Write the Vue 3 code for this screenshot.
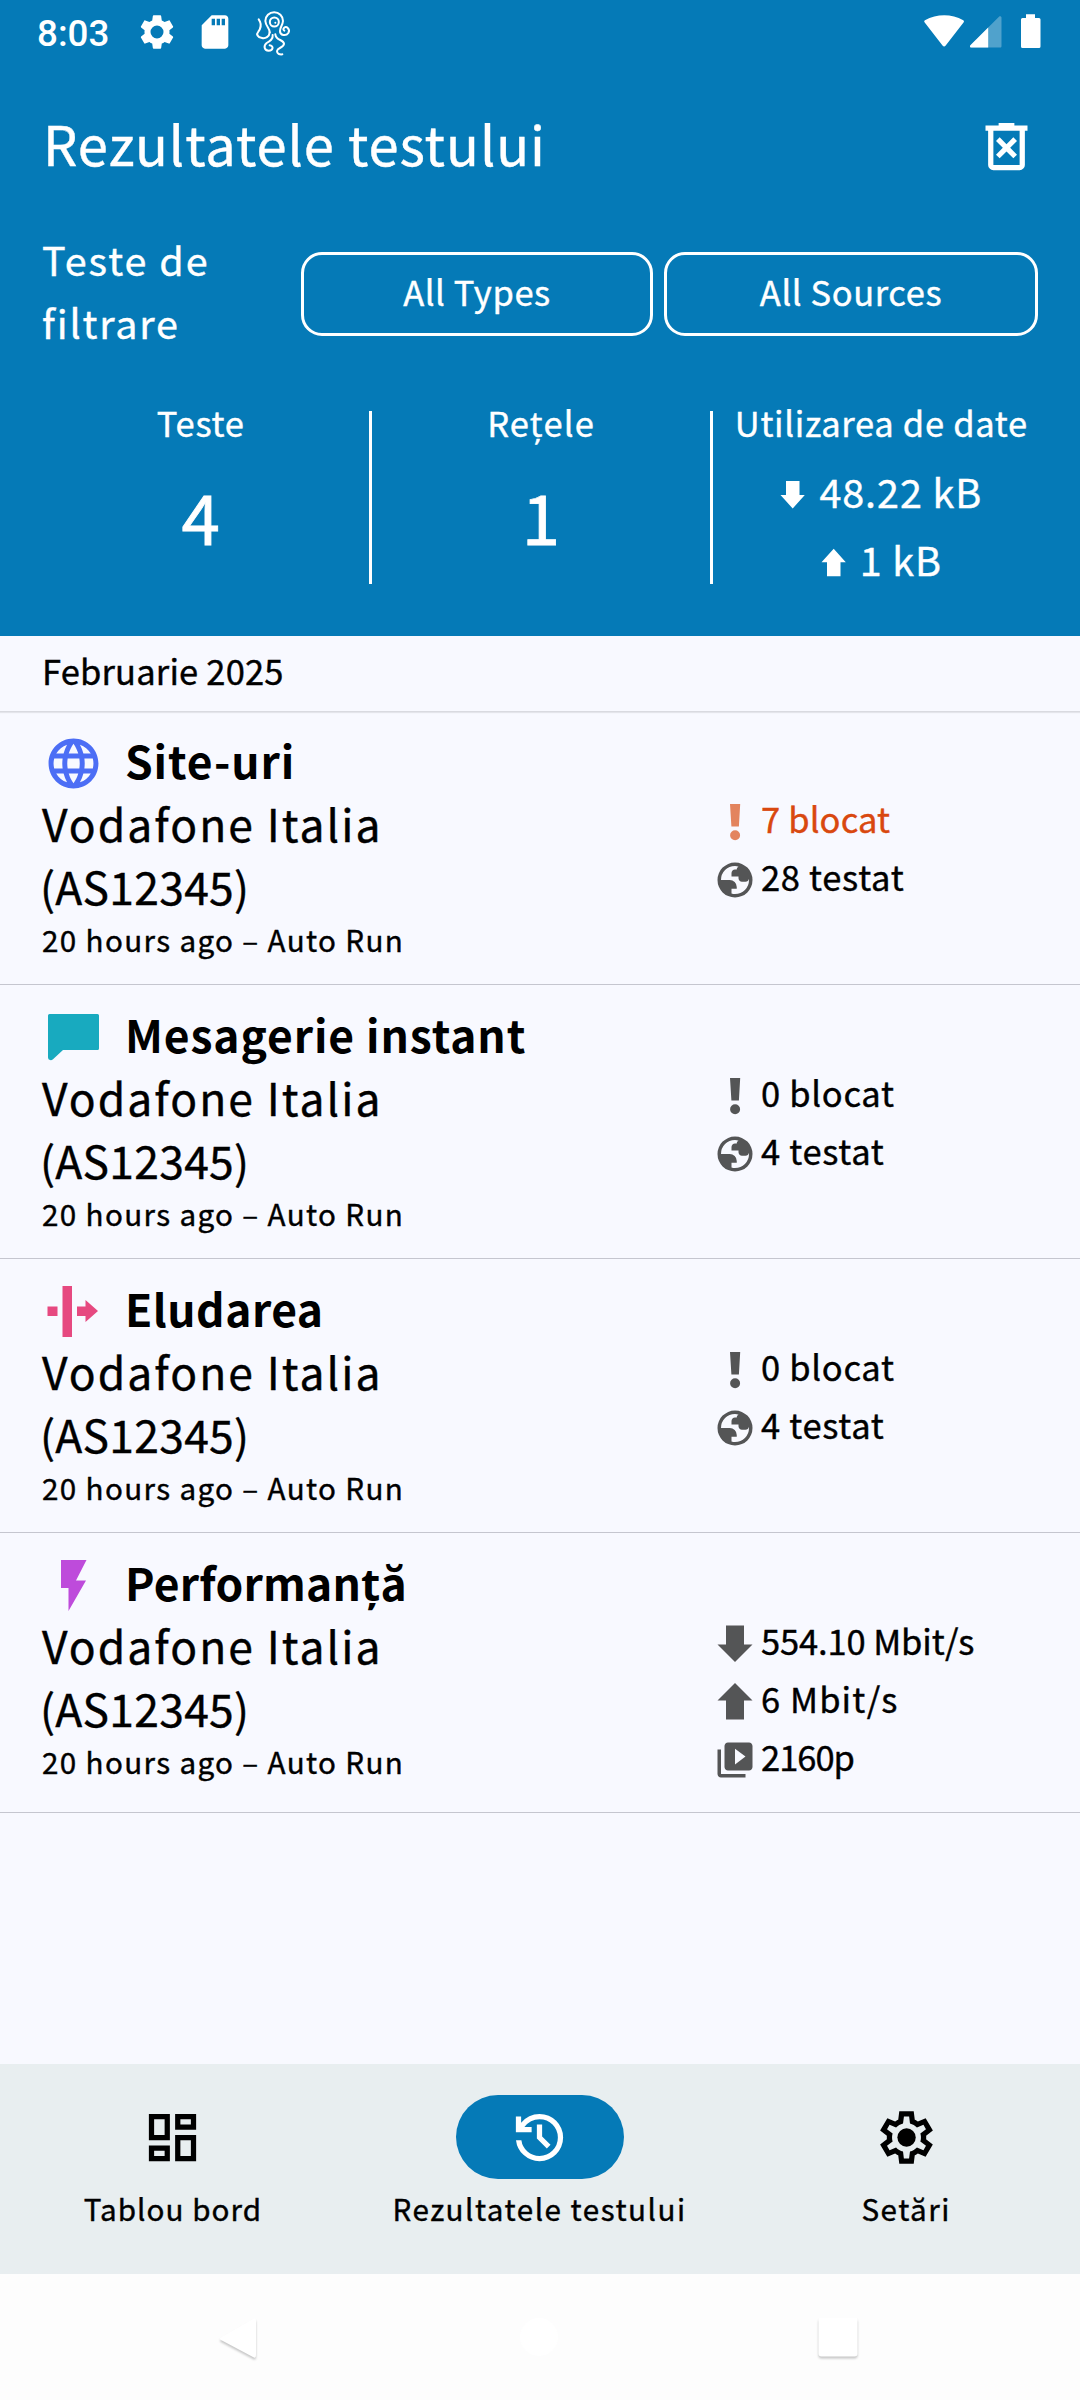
<script setup>
const results = [
  {
    icon: 'web', title: 'Site-uri',
    stats: [
      { icon: 'alert', text: '7 blocat', hot: true },
      { icon: 'globe', text: '28 testat' },
    ],
  },
  {
    icon: 'chat', title: 'Mesagerie instant',
    stats: [
      { icon: 'alert', text: '0 blocat' },
      { icon: 'globe', text: '4 testat' },
    ],
  },
  {
    icon: 'bypass', title: 'Eludarea',
    stats: [
      { icon: 'alert', text: '0 blocat' },
      { icon: 'globe', text: '4 testat' },
    ],
  },
  {
    icon: 'bolt', title: 'Performanță',
    stats: [
      { icon: 'down', text: '554.10 Mbit/s', spacing: 'tight' },
      { icon: 'up', text: '6 Mbit/s', spacing: 'wide' },
      { icon: 'video', text: '2160p', spacing: 'tighter' },
    ],
  },
]
</script>

<template>
  <div class="screen">
    <header class="top">
      <div class="status">
        <span class="time">8:03</span>
        <svg class="s-gear" width="40" height="40" viewBox="0 0 24 24" fill="#fff"><path d="M19.5 12c0-.34-.03-.66-.07-.98l2.11-1.65c.19-.15.24-.42.12-.64l-2-3.46c-.12-.22-.39-.3-.61-.22l-2.49 1c-.52-.4-1.08-.73-1.69-.98l-.38-2.65A.49.49 0 0 0 14 2h-4c-.25 0-.46.18-.49.42l-.38 2.65c-.61.25-1.17.59-1.69.98l-2.49-1c-.23-.09-.49 0-.61.22l-2 3.46c-.13.22-.07.49.12.64l2.11 1.65c-.04.32-.07.65-.07.98s.03.66.07.98l-2.11 1.65c-.19.15-.24.42-.12.64l2 3.46c.12.22.39.3.61.22l2.49-1c.52.4 1.08.73 1.69.98l.38 2.65c.03.24.24.42.49.42h4c.25 0 .46-.18.49-.42l.38-2.65c.61-.25 1.17-.59 1.69-.98l2.49 1c.23.09.49 0 .61-.22l2-3.46c.12-.22.07-.49-.12-.64l-2.11-1.65c.04-.32.07-.64.07-.98zM12 15.9a3.9 3.9 0 1 1 0-7.8a3.9 3.9 0 0 1 0 7.8z" /></svg>
        <svg class="s-sd" width="40" height="40" viewBox="0 0 24 24" fill="#fff"><path d="M18 2h-8L4.02 8 4 20c0 1.1.9 2 2 2h12c1.1 0 2-.9 2-2V4c0-1.1-.9-2-2-2zm-6 6h-2V4h2v4zm3 0h-2V4h2v4zm3 0h-2V4h2v4z" /></svg>
        <svg class="s-octo" width="50" height="54" viewBox="0 0 150 162" fill="none" stroke="#fff" stroke-width="6" stroke-linecap="round">
          <path d="M59 82C60 70 47 64 46 48a26 26 0 0 1 53 0C98 61 90 66 90 78C90 92 108 94 115 84C122 72 108 60 101 70C99 73 101 76 103 77" />
          <path d="M59 82C58 96 46 101 36 99C22 97 18 88 25 80C31 72 35 62 30 50L26 43" />
          <path d="M68 90C70 102 60 108 50 114C40 122 42 136 56 137C70 137 72 122 59 121" />
          <path d="M76 88C78 108 100 102 102 116C102 128 82 128 81 138C81 146 88 149 97 148" />
          <circle cx="73" cy="51" r="13.5" />
          <circle cx="76" cy="53" r="3" fill="#fff" stroke="none" />
        </svg>
        <svg class="s-right" width="125" height="40" viewBox="0 0 125 40" fill="#fff">
          <path d="M1.5 10.2C1 9.5 1.2 8.7 1.9 8.2C14 1.7 28.5 1.7 40.3 8.2C41 8.7 41.2 9.5 40.7 10.2L22.7 33.4C21.7 34.7 20.5 34.7 19.5 33.4z" />
          <path d="M48 35.5C46.8 35.5 46.7 34 47.4 33.2L76 4.7C77 3.7 78.5 4.3 78.5 5.7V34C78.5 35 78 35.5 77.2 35.5z" opacity=".3" />
          <path d="M48 35.5C46.8 35.5 46.7 34 47.4 33.2L65.2 15.5V35.5z" />
          <path d="M103 2.3h9v3.7h4a1.5 1.5 0 0 1 1.5 1.5V34.5a1.5 1.5 0 0 1-1.5 1.5H99.5A1.5 1.5 0 0 1 98 34.5V7.5A1.5 1.5 0 0 1 99.5 6H103z" />
        </svg>
      </div>

      <div class="title-row">
        <h1>Rezultatele testului</h1>
        <svg width="63" height="63" viewBox="0 -960 960 960" fill="#fff"><path d="m376-300 104-104 104 104 56-56-104-104 104-104-56-56-104 104-104-104-56 56 104 104-104 104 56 56Zm-96 180q-33 0-56.5-23.5T200-200v-520h-40v-80h200v-40h240v40h200v80h-40v520q0 33-23.5 56.5T680-120H280Zm400-600H280v520h400v-520Z" /></svg>
      </div>

      <div class="filters">
        <div class="filter-label"><div>Teste de</div><div class="l2">filtrare</div></div>
        <button class="types">All Types</button>
        <button class="sources">All Sources</button>
      </div>

      <div class="summary">
        <div class="cell"><span class="cap">Teste</span><span class="num">4</span></div>
        <i></i>
        <div class="cell"><span class="cap nets">Rețele</span><span class="num">1</span></div>
        <i></i>
        <div class="cell usage">
          <span class="cap">Utilizarea de date</span>
          <span class="data first"><svg width="42" height="42" viewBox="0 0 42 42"><path d="M14 7h13.5v14h5.3L20.7 34.5L8.5 21h5.5z" fill="#fff" /></svg>48.22 kB</span>
          <span class="data"><svg width="42" height="42" viewBox="0 0 42 42"><path d="M14 34.2h13.5V20.2h5.3L20.7 6.7L8.500 20.2h5.5z" fill="#fff" /></svg>1 kB</span>
        </div>
      </div>
    </header>

    <main>
      <div class="month">Februarie 2025</div>
      <article v-for="r in results" :key="r.title" :class="{ tall: r.stats.length > 2 }">
        <div class="info">
          <div class="head" :class="r.icon">
            <svg v-if="r.icon === 'web'" width="63" height="63" viewBox="0 0 24 24" fill="#4c6ef5"><path transform="translate(.6 .6) scale(.95)" d="M11.99 2C6.47 2 2 6.48 2 12s4.47 10 9.99 10C17.52 22 22 17.52 22 12S17.52 2 11.99 2zm6.93 6h-2.95c-.32-1.25-.78-2.45-1.38-3.56 1.84.63 3.37 1.91 4.33 3.56zM12 4.04c.83 1.2 1.48 2.53 1.91 3.96h-3.82c.43-1.43 1.08-2.76 1.91-3.96zM4.26 14C4.1 13.36 4 12.69 4 12s.1-1.36.26-2h3.38c-.08.66-.14 1.32-.14 2s.06 1.34.14 2H4.26zm.82 2h2.95c.32 1.25.78 2.45 1.38 3.56-1.84-.63-3.37-1.9-4.33-3.56zm2.95-8H5.08c.96-1.66 2.49-2.93 4.33-3.56C8.81 5.55 8.35 6.75 8.03 8zM12 19.96c-.83-1.2-1.48-2.53-1.91-3.96h3.82c-.43 1.43-1.08 2.76-1.91 3.96zM14.34 14H9.66c-.09-.66-.16-1.32-.16-2s.07-1.35.16-2h4.68c.09.65.16 1.32.16 2s-.07 1.34-.16 2zm.25 5.56c.6-1.11 1.06-2.31 1.38-3.56h2.95c-.96 1.65-2.49 2.93-4.33 3.56zM16.36 14c.08-.66.14-1.32.14-2s-.06-1.34-.14-2h3.38c.16.64.26 1.31.26 2s-.1 1.36-.26 2h-3.38z" /></svg>
            <svg v-else-if="r.icon === 'chat'" width="63" height="63" viewBox="0 0 63 63" fill="#18aabf"><path d="M7.5 8h48a1.5 1.5 0 0 1 1.5 1.5V42.5a1.5 1.5 0 0 1-1.5 1.5H21L11 53.3Q9.5 54.5 8 54Q6 53.5 6 51.5V9.5A1.5 1.5 0 0 1 7.5 8z" /></svg>
            <svg v-else-if="r.icon === 'bypass'" width="63" height="63" viewBox="0 0 63 63" fill="#e64980"><path d="M20.5 6H30V57H20.5zM5.5 26.5H15.5V36H5.5zM35 26.5H43.5V20L56 31L43.5 42V36H35z" /></svg>
            <svg v-else width="63" height="63" viewBox="0 0 63 63" fill="#be4bdb"><path d="M19 6H44.5L34 26.5H44L26.5 57V34H19z" /></svg>
            <h2>{{ r.title }}</h2>
          </div>
          <div class="net">Vodafone Italia</div>
          <div class="net asn">(AS12345)</div>
          <div class="ago">20 hours ago – Auto Run</div>
        </div>
        <div class="stats">
          <div v-for="s in r.stats" :key="s.text" class="stat" :class="[s.spacing, { hot: s.hot }]">
            <svg v-if="s.icon === 'alert'" width="42" height="42" viewBox="0 0 42 42"><path d="M16 3h10.2l-1.3 22.5h-7.5zM21.1 29.2a5 5 0 1 1 0 10a5 5 0 0 1 0-10z" /></svg>
            <svg v-else-if="s.icon === 'globe'" width="42" height="42" viewBox="0 -960 960 960"><path fill-rule="evenodd" d="M480-80q-83 0-156-31.5T197-197q-54-54-85.5-127T80-480q0-83 31.5-156T197-763q54-54 127-85.5T480-880q83 0 156 31.5T763-763q54 54 85.5 127T880-480q0 83-31.5 156T763-197q-54 54-127 85.5T480-80Zm0-80q134 0 227-93t93-227q0-7-.5-14.5T799-507q-5 29-27 48t-52 19h-80q-33 0-56.5-23.5T560-520v-40H400v-80q0-33 23.5-56.5T480-720h40q0-23 12.5-40.5T563-789q-20-5-40.5-8t-42.5-3q-134 0-227 93t-93 227h200q66 0 113 47t47 113v40H400v110q20 5 39.5 7.5T480-160Z" /></svg>
            <svg v-else-if="s.icon === 'down'" width="42" height="42" viewBox="0 0 42 42"><path d="M12 2.5H30V21.5H38.5L21 39L3.5 21.5H12z" /></svg>
            <svg v-else-if="s.icon === 'up'" width="42" height="42" viewBox="0 0 42 42"><path d="M12 38.5H30V19.5H38.5L21 2L3.5 19.5H12z" /></svg>
            <svg v-else width="42" height="42" viewBox="0 0 24 24"><path d="M4 6H2v14c0 1.1.9 2 2 2h14v-2H4V6zm16-4H8c-1.1 0-2 .9-2 2v12c0 1.1.9 2 2 2h12c1.1 0 2-.9 2-2V4c0-1.1-.9-2-2-2zm-8 12.5v-9l6 4.5-6 4.5z" /></svg>
            <span>{{ s.text }}</span>
          </div>
        </div>
      </article>
    </main>

    <nav class="tabs">
      <div class="tab">
        <div class="pill"><svg width="63" height="63" viewBox="0 0 24 24"><path d="M19 5v2h-4V5h4M9 5v6H5V5h4m10 8v6h-4v-6h4M9 17v2H5v-2h4M21 3h-8v6h8V3zM11 3H3v10h8V3zm10 8h-8v10h8V11zm-10 4H3v6h8v-6z" /></svg></div>
        <span class="t1">Tablou bord</span>
      </div>
      <div class="tab on">
        <div class="pill"><svg width="63" height="63" viewBox="0 -960 960 960" fill="#fff"><path d="M480-120q-138 0-240.5-91.5T122-440h82q14 104 92.5 172T480-200q117 0 198.5-81.5T760-480q0-117-81.5-198.5T480-760q-69 0-129 32t-101 88h110v80H120v-240h80v94q51-64 124.5-99T480-840q75 0 140.5 28.5t114 77q48.5 48.5 77 114T840-480q0 75-28.5 140.5t-77 114q-48.5 48.5-114 77T480-120Zm112-192L440-464v-216h80v184l128 128-56 56Z" /></svg></div>
        <span>Rezultatele testului</span>
      </div>
      <div class="tab">
        <div class="pill"><svg width="63" height="63" viewBox="0 -960 960 960"><path d="m370-80-16-128q-13-5-24.5-12T307-235l-119 50L78-375l103-78q-1-7-1-13.5v-27q0-6.5 1-13.5L78-585l110-190 119 50q11-8 23-15t24-12l16-128h220l16 128q13 5 24.5 12t22.5 15l119-50 110 190-103 78q1 7 1 13.5v27q0 6.5-2 13.5l103 78-110 190-118-50q-11 8-23 15t-24 12L590-80H370Zm70-80h79l14-106q31-8 57.5-23.5T639-327l99 41 39-68-86-65q5-14 7-29.5t2-31.5q0-16-2-31.5t-7-29.5l86-65-39-68-99 42q-22-23-48.5-38.5T533-694l-13-106h-79l-14 106q-31 8-57.5 23.5T321-633l-99-41-39 68 86 64q-5 15-7 30t-2 32q0 16 2 31t7 30l-86 65 39 68 99-42q22 23 48.5 38.5T427-266l13 106Z" /><circle cx="481" cy="-480" r="140" /></svg></div>
        <span>Setări</span>
      </div>
    </nav>

    <div class="system">
      <svg width="60" height="60" viewBox="0 0 60 60"><path d="M12 30.5L44 12Q47 10.5 47 14V48Q47 52 44 50L12 33Q10 31.7 12 30.5z" fill="#fff" /></svg>
      <svg class="flat" width="60" height="60" viewBox="0 0 60 60"><circle cx="30" cy="30" r="19" fill="#fff" /></svg>
      <svg width="60" height="60" viewBox="0 0 60 60"><rect x="10.5" y="10.5" width="39" height="39" rx="3" fill="#fff" /></svg>
    </div>
  </div>
</template>

<style>
body { margin: 0; }
</style>

<style scoped>
.screen {
  width: 1080px;
  height: 2400px;
  display: flex;
  flex-direction: column;
  overflow: hidden;
  background: #f8f9ff;
  color: #000;
  font-family: "Noto Sans CJK SC", "Noto Sans", sans-serif;
  -webkit-text-stroke: .4px currentColor;
}
svg { display: block; flex: none; }
h1, h2 { margin: 0; }
.top { height: 636px; background: #057ab7; color: #fff; }
.status { display: flex; align-items: center; height: 63px; padding: 0 36px 0 37px; }
.time { width: 100px; font: 500 36.75px/40px Roboto, sans-serif; padding-top: 4px; -webkit-text-stroke: 0; }
.s-sd { margin-left: 18px; }
.s-octo { margin-left: 15px; }
.s-right { margin-left: auto; margin-right: -4px; }
.title-row { display: flex; align-items: center; justify-content: space-between; height: 162px; padding: 4px 42px 0 43px; box-sizing: border-box; }
h1 { font-size: 54.3px; line-height: 76px; font-weight: 400; letter-spacing: .92px; padding-bottom: 6px; }
.filters { display: flex; align-items: center; height: 128px; padding: 2px 42px 0; }
.filter-label { width: 259px; margin-top: -2px; font-size: 39.5px; line-height: 63px; letter-spacing: 2px; }
.filter-label div { height: 63px; }
.filter-label .l2 { letter-spacing: 1.84px; }
button {
  box-sizing: border-box;
  height: 84px;
  margin: 6px 0 0;
  padding: 0 0 6px;
  border: 3px solid #fff;
  border-radius: 21px;
  background: none;
  color: #fff;
  font: 400 34.5px/48px "Noto Sans CJK SC", "Noto Sans", sans-serif;
  letter-spacing: .6px;
}
.types { width: 352px; }
.sources { width: 374px; margin-left: 11px; }
.summary { display: flex; margin-top: 46px; padding: 0 30px 0 32px; }
.summary i { width: 3px; height: 173px; margin-top: 10px; background: #fff; }
.cell { flex: 1; display: flex; flex-direction: column; align-items: center; white-space: nowrap; }
.usage { position: relative; }
.cap { height: 42px; font-size: 34.5px; line-height: 42px; letter-spacing: .7px; }
.nets { letter-spacing: 1.1px; }
.num { margin-top: 32px; height: 80px; font-size: 69.1px; line-height: 80px; -webkit-text-stroke-width: .8px; }
.data { display: flex; align-items: center; height: 68px; font-size: 39.5px; line-height: 60px; letter-spacing: .95px; }
.data svg { margin: 8px 5px 0 -8px; }
.first { margin-top: 14px; }
main { flex: 1; }
.month {
  height: 76px;
  padding: 0 42px;
  font-size: 34.5px;
  line-height: 69px;
  letter-spacing: .19px;
  box-sizing: border-box;
  border-bottom: 1px solid #d9dae0;
  box-shadow: 0 1px 1px #e4e5eb;
}
article { display: flex; height: 274px; padding: 17px 42px 0; box-sizing: border-box; border-bottom: 1px solid #c5c6cf; }
.month + article { height: 273px; padding-top: 16px; }
article.tall { height: 280px; }
.info { width: 672px; }
.head { display: flex; align-items: center; height: 63px; }
.head svg { margin: 8px 20px 0 0; }
h2 { font-size: 44.4px; line-height: 63px; height: 63px; font-weight: 700; letter-spacing: .9px; -webkit-text-stroke: 0; }
.bypass h2 { letter-spacing: .5px; }
.bolt h2 { letter-spacing: .2px; }
.net { height: 63px; font-size: 44.4px; line-height: 63px; letter-spacing: 2.02px; }
.net.asn { letter-spacing: .3px; margin-left: -2px; }
.ago { padding-top: 2px; font-size: 29.6px; line-height: 42px; letter-spacing: 1.36px; }
.stats { padding-top: 60px; }
.stat { display: flex; align-items: center; height: 58px; font-size: 34.5px; line-height: 58px; letter-spacing: .7px; white-space: nowrap; }
.stat span { height: 58px; padding-top: 2px; }
.stat svg { margin: 10px 5px 0 0; fill: #545556; }
.hot { color: #d9480f; letter-spacing: .15px; }
.hot svg { fill: #e3845e; }
.tight { letter-spacing: -.12px; }
.wide { letter-spacing: 1.1px; }
.tighter { letter-spacing: -1px; }
.tabs { display: flex; gap: 21px; height: 210px; padding-right: 1px; background: #e8eef0; }
.tab { flex: 1; display: flex; flex-direction: column; align-items: center; padding-top: 31px; font-size: 29.6px; letter-spacing: 1.5px; line-height: 42px; white-space: nowrap; }
.tab span { height: 42px; margin-top: 9px; }
.tab .t1 { letter-spacing: 1.04px; }
.pill { display: flex; align-items: center; justify-content: center; width: 168px; height: 84px; border-radius: 42px; }
.on .pill { background: #057ab7; }
.system { display: flex; justify-content: space-between; padding: 33px 212px 33px 209px; background: #fdfdfd; }
.system svg { filter: drop-shadow(0 2px 1px rgba(0, 0, 0, .22)); }
.system .flat { filter: none; }
</style>
